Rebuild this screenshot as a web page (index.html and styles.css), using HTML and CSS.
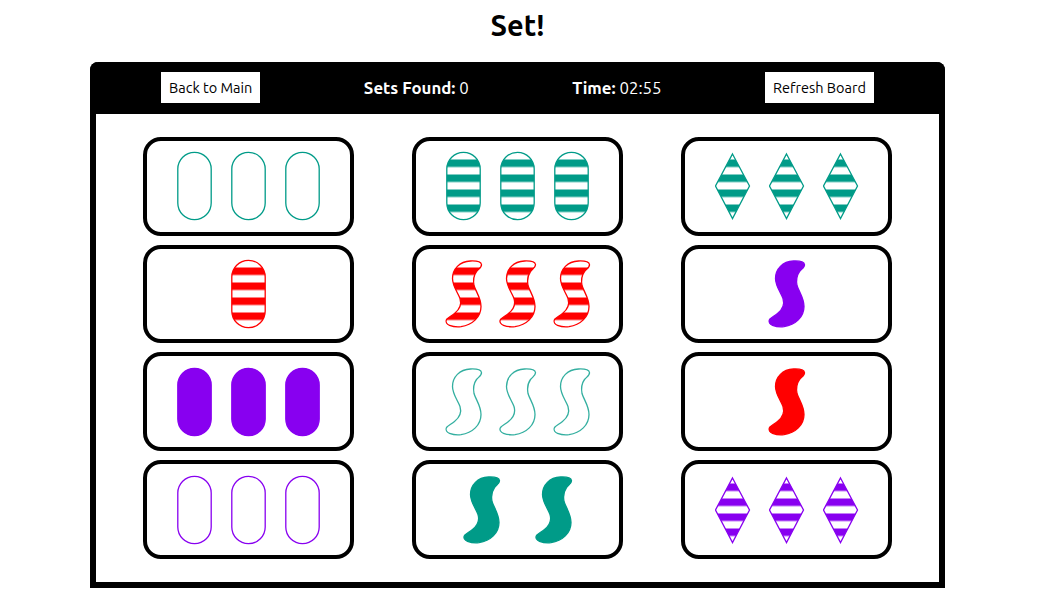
FILE: index.html
```html
<!DOCTYPE html>
<html>
<head>
  <title>Set!</title>
  <link rel="stylesheet" href="styles.css">
</head>
<body>
  <svg class="defs" width="0" height="0">
    <defs>
      <pattern id="stripes-teal" patternUnits="userSpaceOnUse" x="0" y="8.5" width="36" height="15">
        <rect width="36" height="7.5" fill="#009b88"></rect>
      </pattern>
      <pattern id="stripes-red" patternUnits="userSpaceOnUse" x="0" y="8.5" width="36" height="15">
        <rect width="36" height="7.5" fill="#ff0000"></rect>
      </pattern>
      <pattern id="stripes-purple" patternUnits="userSpaceOnUse" x="0" y="8.5" width="36" height="15">
        <rect width="36" height="7.5" fill="#8800f0"></rect>
      </pattern>
      <symbol id="oval" viewBox="0 0 36 70">
        <rect x="0.8" y="1.3" width="33.4" height="67.4" rx="16.7" ry="16.7"></rect>
      </symbol>
      <symbol id="diamond" viewBox="0 0 36 70">
        <polygon points="17.5,3 34.5,35 17.5,67.5 0.5,35"></polygon>
      </symbol>
      <symbol id="squiggle" viewBox="0 0 36 70" overflow="visible">
        <path d="M35.5 5.5C35 2.5 29.5 1.8 24.5 2C13.5 2.5 6.5 10 6.5 19.5C6.5 27 11.5 33 14 39.5C16 46 13.5 50.5 8.5 54.5C5.5 57 2 58.5 0.5 60.5C-1 63 1 65.5 3.5 66.3C7.5 67.8 11.5 68 15 67.6C26.5 66 35 58 35 47.5C35 39 30 33 28 26.5C27 21 28 16 30.5 12.5C32.5 10 35.8 8.5 35.5 5.5Z"></path>
      </symbol>
    </defs>
  </svg>

  <div class="page">
    <h1>Set!</h1>

    <div class="board">
      <div class="topbar">
        <button>Back to Main</button>
        <span class="stat"><b>Sets Found:</b> 0</span>
        <span class="stat"><b>Time:</b> 02:55</span>
        <button>Refresh Board</button>
      </div>

      <div class="cards">
        <div class="card">
          <svg class="shape teal open"><use href="#oval"></use></svg>
          <svg class="shape teal open"><use href="#oval"></use></svg>
          <svg class="shape teal open"><use href="#oval"></use></svg>
        </div>
        <div class="card">
          <svg class="shape teal"><use href="#oval" fill="url(#stripes-teal)"></use></svg>
          <svg class="shape teal"><use href="#oval" fill="url(#stripes-teal)"></use></svg>
          <svg class="shape teal"><use href="#oval" fill="url(#stripes-teal)"></use></svg>
        </div>
        <div class="card">
          <svg class="shape teal"><use href="#diamond" fill="url(#stripes-teal)"></use></svg>
          <svg class="shape teal"><use href="#diamond" fill="url(#stripes-teal)"></use></svg>
          <svg class="shape teal"><use href="#diamond" fill="url(#stripes-teal)"></use></svg>
        </div>

        <div class="card">
          <svg class="shape red"><use href="#oval" fill="url(#stripes-red)"></use></svg>
        </div>
        <div class="card">
          <svg class="shape red"><use href="#squiggle" fill="url(#stripes-red)"></use></svg>
          <svg class="shape red"><use href="#squiggle" fill="url(#stripes-red)"></use></svg>
          <svg class="shape red"><use href="#squiggle" fill="url(#stripes-red)"></use></svg>
        </div>
        <div class="card">
          <svg class="shape purple solid"><use href="#squiggle"></use></svg>
        </div>

        <div class="card">
          <svg class="shape purple solid"><use href="#oval"></use></svg>
          <svg class="shape purple solid"><use href="#oval"></use></svg>
          <svg class="shape purple solid"><use href="#oval"></use></svg>
        </div>
        <div class="card">
          <svg class="shape teal open faded"><use href="#squiggle"></use></svg>
          <svg class="shape teal open faded"><use href="#squiggle"></use></svg>
          <svg class="shape teal open faded"><use href="#squiggle"></use></svg>
        </div>
        <div class="card">
          <svg class="shape red solid"><use href="#squiggle"></use></svg>
        </div>

        <div class="card">
          <svg class="shape purple open"><use href="#oval"></use></svg>
          <svg class="shape purple open"><use href="#oval"></use></svg>
          <svg class="shape purple open"><use href="#oval"></use></svg>
        </div>
        <div class="card">
          <svg class="shape teal solid"><use href="#squiggle"></use></svg>
          <svg class="shape teal solid"><use href="#squiggle"></use></svg>
        </div>
        <div class="card">
          <svg class="shape purple"><use href="#diamond" fill="url(#stripes-purple)"></use></svg>
          <svg class="shape purple"><use href="#diamond" fill="url(#stripes-purple)"></use></svg>
          <svg class="shape purple"><use href="#diamond" fill="url(#stripes-purple)"></use></svg>
        </div>
      </div>
    </div>
  </div>
</body>
</html>
```

FILE: styles.css
```css
body {
  margin: 0;
  background-color: white;
  font-family: Ubuntu, "Noto Sans", sans-serif;
  color: black;
}

.defs {
  display: block;
}

/* the board is centred in 1035px, not the whole window */
.page {
  width: 1035px;
  display: flex;
  flex-direction: column;
  align-items: center;
}

h1 {
  margin: 0;
  height: 62px;
  padding-top: 6px;
  box-sizing: border-box;
  font-size: 29px;
  line-height: 38px;
  font-weight: bold;
}

.board {
  width: 855px;
  box-sizing: border-box;
  border: 6px solid black;
  border-top: none;
  border-radius: 8px 8px 0 0;
}

.topbar {
  height: 52px;
  margin: 0 -6px;
  padding: 10px 71px 11px;
  box-sizing: border-box;
  background-color: black;
  border-radius: 8px 8px 0 0;
  color: white;
  display: flex;
  justify-content: space-between;
  align-items: center;
}

button {
  height: 31px;
  padding: 0 8px;
  background-color: white;
  color: black;
  border: none;
  font-family: inherit;
  font-size: 14.5px;
}

.stat {
  font-size: 16.8px;
}

.cards {
  height: 468px;
  box-sizing: border-box;
  padding: 22.9px 47px;
  display: grid;
  grid-template-columns: repeat(3, 211px);
  grid-template-rows: repeat(4, 98.8px);
  column-gap: 58px;
  row-gap: 9px;
}

.card {
  border: 4px solid black;
  border-radius: 18px;
  padding: 0 11.5px;
  display: flex;
  justify-content: space-evenly;
  align-items: center;
}

.shape {
  width: 36px;
  height: 70px;
  stroke-width: 1.3;
  overflow: visible;
}

.teal {
  color: #009b88;
  stroke: #009b88;
}

.red {
  color: #ff0000;
  stroke: #ff0000;
}

.purple {
  color: #8800f0;
  stroke: #8800f0;
}

.open {
  fill: none;
}

.solid {
  fill: currentColor;
}

.faded {
  opacity: 0.8;
}
```
